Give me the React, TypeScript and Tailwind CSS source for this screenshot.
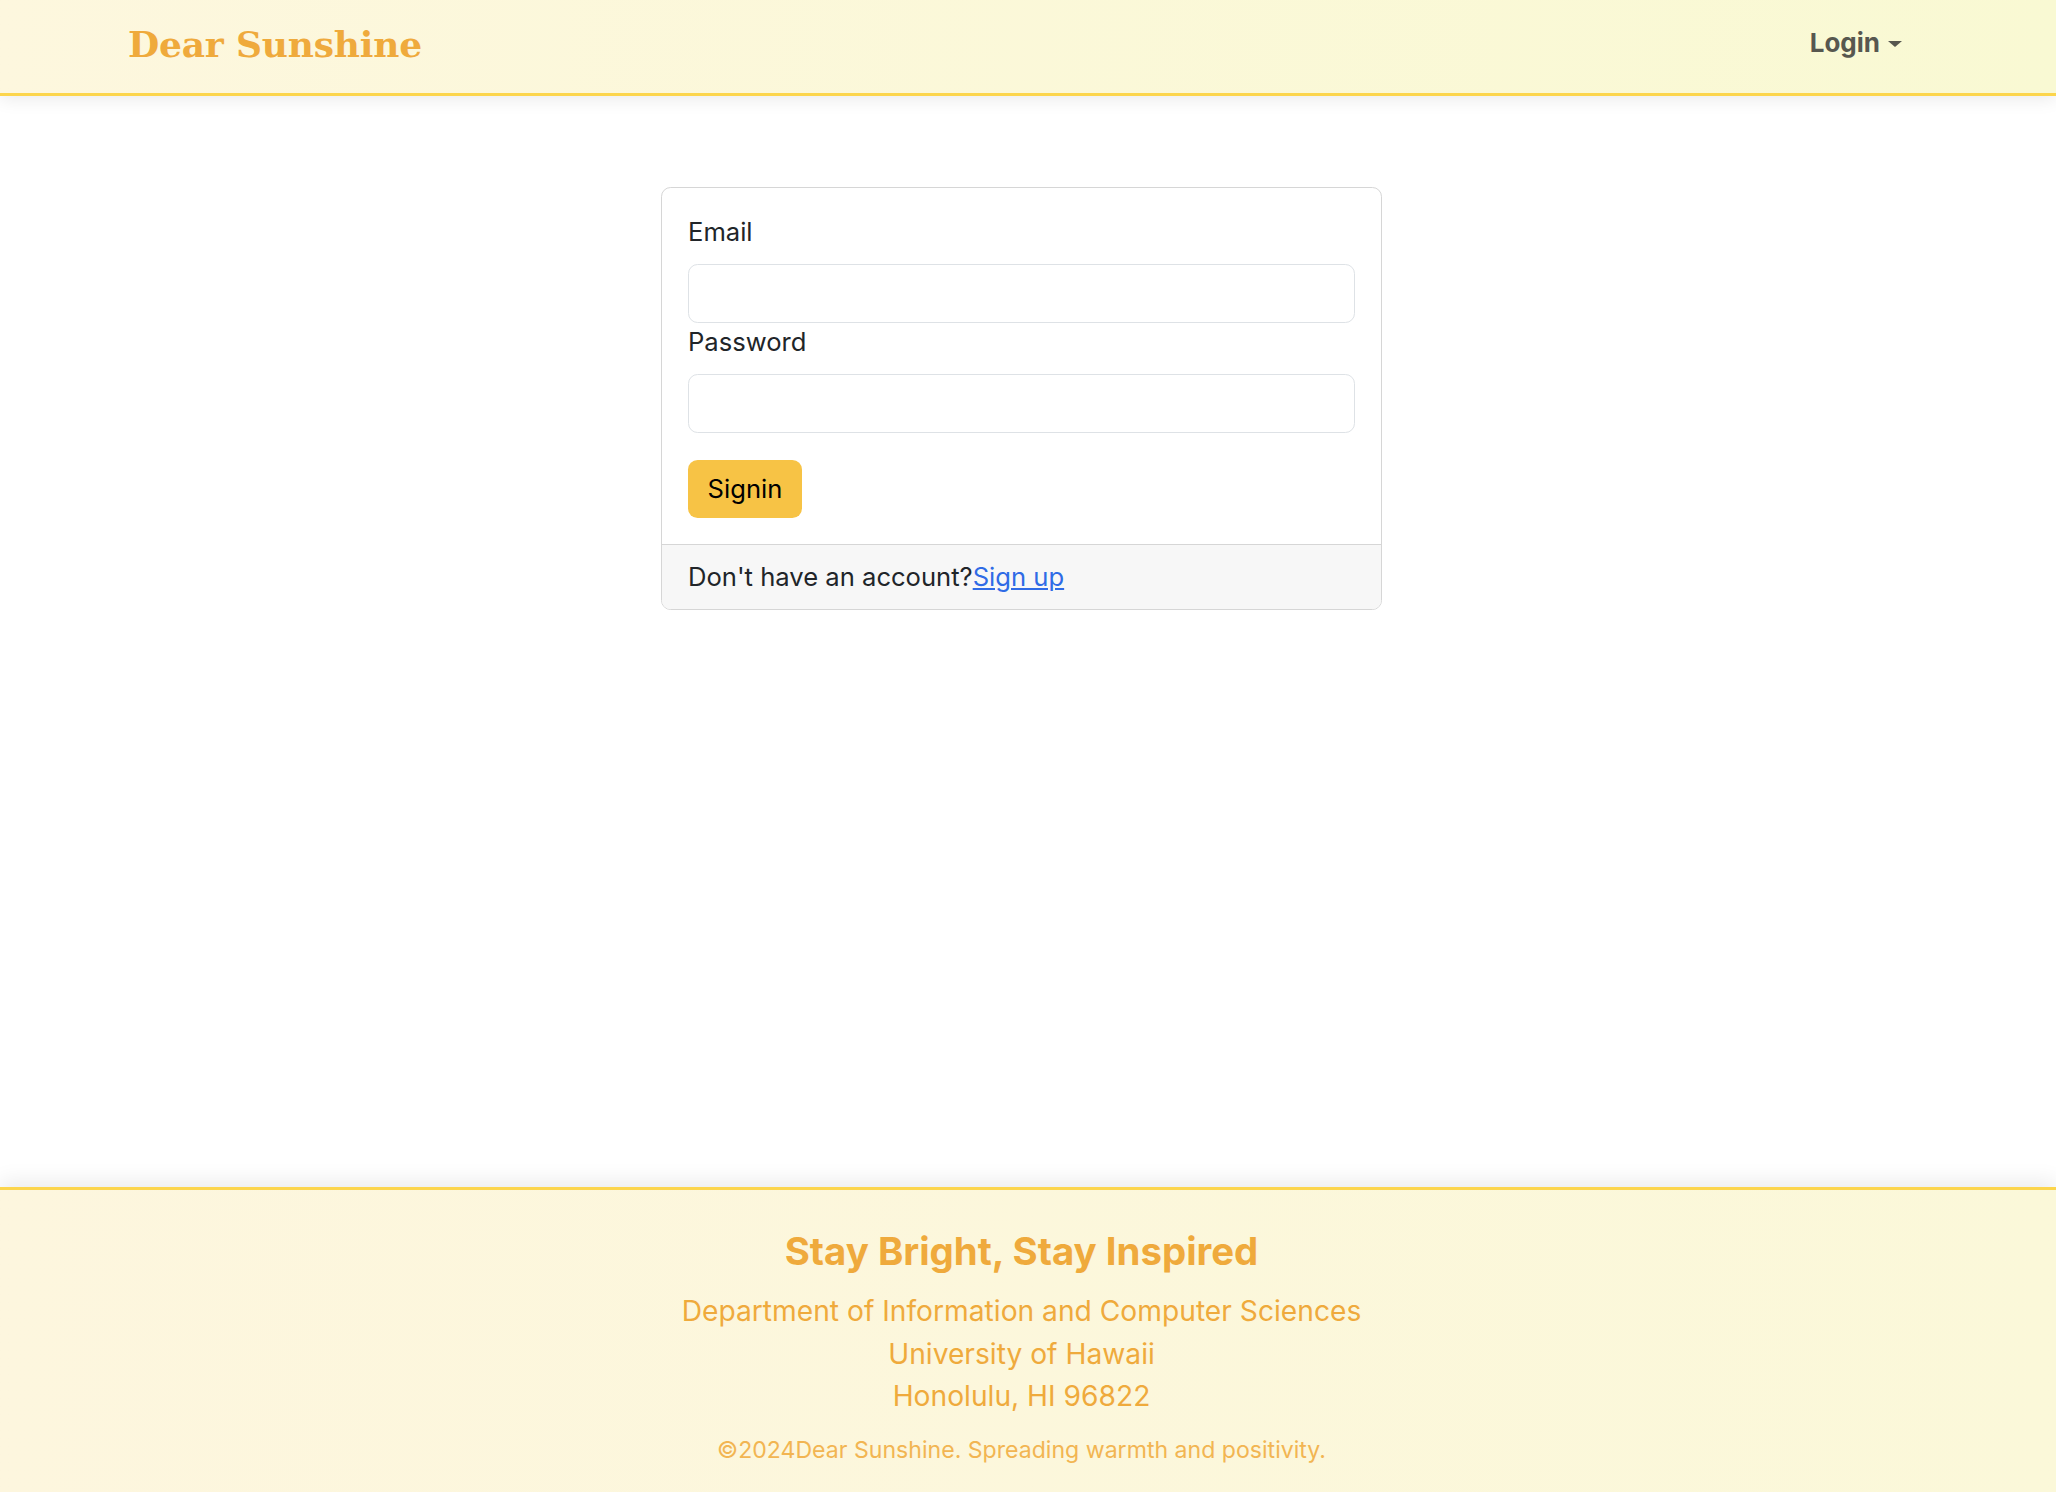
import React from 'react';

const Header: React.FC = () => (
    <header className="relative z-10 flex h-[96px] items-center justify-between border-b-[3px] border-[#fcd54c] bg-linear-to-r from-[#fdf7de] to-[#f9f9d3] pl-[128px] pr-[154px] shadow-[0_4px_16px_rgba(0,0,0,0.08)]">
        <a
            href="#"
            className="pb-[6px] text-[36px] font-bold leading-none tracking-[-0.2px] text-[#efaa3c]"
            style={{ fontFamily: '"DejaVu Serif", Georgia, serif' }}
        >
            Dear Sunshine
        </a>
        <button className="flex items-center pb-[8px] text-[26px] font-bold text-[#57574f]">
            Login
            <span className="ml-[8px] mt-[3px] h-0 w-0 border-x-[7px] border-t-[6px] border-x-transparent border-t-[#57574f]" />
        </button>
    </header>
);

const SigninCard: React.FC = () => (
    <div className="w-[721px] overflow-hidden rounded-[9.6px] border border-[#d6d6d6] bg-white">
        <div className="px-[26px] pb-[26px] pt-[24.6px]">
            <label className="mb-[13px] block text-[25.6px] leading-[38.4px]">Email</label>
            <input type="email" className="block h-[59px] w-full rounded-[9.6px] border border-[#dee2e6] bg-white px-[19px] outline-none" />
            <label className="mb-[12.6px] block text-[25.6px] leading-[38.4px]">Password</label>
            <input type="password" className="block h-[59px] w-full rounded-[9.6px] border border-[#dee2e6] bg-white px-[19px] outline-none" />
            <button className="mt-[27px] flex h-[58px] w-[114px] items-center justify-center rounded-[9.6px] bg-[#f7c345] text-[25.6px] text-black">
                Signin
            </button>
        </div>
        <div className="border-t border-[#d6d6d6] bg-[#f7f7f7] px-[26px] py-[12.8px] text-[25.6px] leading-[38.4px]">
            Don't have an account?
            <a href="#" className="text-[#2f6be6] underline">Sign up</a>
        </div>
    </div>
);

const Footer: React.FC = () => (
    <footer className="relative z-10 h-[305px] border-t-[3px] border-[#fcd54c] bg-linear-to-r from-[#fdf6de] to-[#fbf8d9] pr-[13px] text-center text-[#efaa3c] shadow-[0_-6px_20px_rgba(0,0,0,0.08)]">
        <div className="pt-[38px]">
            <h4 className="text-[38.4px] font-bold leading-[46px] tracking-[0px]">Stay Bright, Stay Inspired</h4>
            <div className="mt-[16px] text-[28.2px] leading-[42.5px]">
                <p>Department of Information and Computer Sciences</p>
                <p>University of Hawaii</p>
                <p>Honolulu, HI 96822</p>
            </div>
            <p className="mt-[16px] text-[23.1px] leading-[33.6px] text-[#f2b552]">
                ©2024Dear Sunshine. Spreading warmth and positivity.
            </p>
        </div>
    </footer>
);

const App: React.FC = () => {
    return (
        <div
            className="flex h-screen flex-col bg-white text-[#212529]"
            style={{ fontFamily: 'Inter, "Noto Sans", sans-serif' }}
        >
            <Header />
            <main className="flex flex-1 justify-center pr-[13px] pt-[91px]">
                <div>
                    <SigninCard />
                </div>
            </main>
            <Footer />
        </div>
    );
};

export default App;
